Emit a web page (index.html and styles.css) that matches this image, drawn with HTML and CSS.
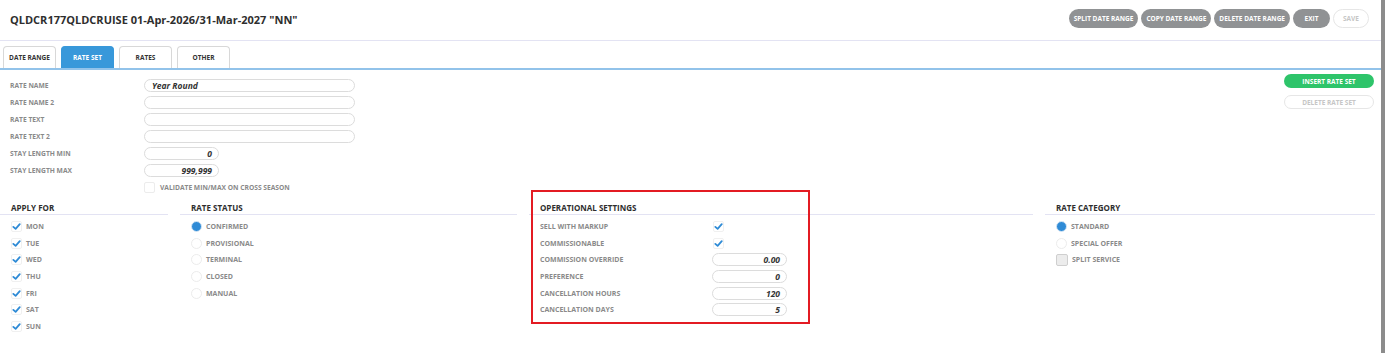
FILE: index.html
```html
<html>
<head>
<title>Rate Set</title>
<link rel="stylesheet" href="styles.css">
</head>
<body>
<div id="page">
<div id="dialog">

<div id="header">
  <h1>QLDCR177QLDCRUISE 01-Apr-2026/31-Mar-2027 "NN"</h1>
  <div class="actions">
    <button class="pill grey">SPLIT DATE RANGE</button>
    <button class="pill grey">COPY DATE RANGE</button>
    <button class="pill grey">DELETE DATE RANGE</button>
    <button class="pill grey exit">EXIT</button>
    <button class="pill light save">SAVE</button>
  </div>
</div>

<div id="tabs">
  <div class="tab">DATE RANGE</div>
  <div class="tab active">RATE SET</div>
  <div class="tab">RATES</div>
  <div class="tab">OTHER</div>
</div>

<div id="rate-set">
  <div class="fields">
    <div class="row"><label>RATE NAME</label><div class="input wide name">Year Round</div></div>
    <div class="row"><label>RATE NAME 2</label><div class="input wide"></div></div>
    <div class="row"><label>RATE TEXT</label><div class="input wide"></div></div>
    <div class="row"><label>RATE TEXT 2</label><div class="input wide"></div></div>
    <div class="row"><label>STAY LENGTH MIN</label><div class="input num">0</div></div>
    <div class="row"><label>STAY LENGTH MAX</label><div class="input num">999,999</div></div>
    <div class="row"><label></label><span class="box empty"></span><span class="opt">VALIDATE MIN/MAX ON CROSS SEASON</span></div>
  </div>
  <div class="side">
    <button class="pill green">INSERT RATE SET</button>
    <button class="pill light">DELETE RATE SET</button>
  </div>
</div>

<div id="sections">
  <div class="section">
    <div class="section-header">APPLY FOR</div>
    <div class="item"><span class="box checked"></span>MON</div>
    <div class="item"><span class="box checked"></span>TUE</div>
    <div class="item"><span class="box checked"></span>WED</div>
    <div class="item"><span class="box checked"></span>THU</div>
    <div class="item"><span class="box checked"></span>FRI</div>
    <div class="item"><span class="box checked"></span>SAT</div>
    <div class="item"><span class="box checked"></span>SUN</div>
  </div>

  <div class="section">
    <div class="section-header">RATE STATUS</div>
    <div class="item"><span class="radio on"></span>CONFIRMED</div>
    <div class="item"><span class="radio"></span>PROVISIONAL</div>
    <div class="item"><span class="radio"></span>TERMINAL</div>
    <div class="item"><span class="radio"></span>CLOSED</div>
    <div class="item"><span class="radio"></span>MANUAL</div>
  </div>

  <div class="section">
    <div class="highlight"></div>
    <div class="section-header">OPERATIONAL SETTINGS</div>
    <div class="item op"><span class="op-label">SELL WITH MARKUP</span><span class="box checked"></span></div>
    <div class="item op"><span class="op-label">COMMISSIONABLE</span><span class="box checked"></span></div>
    <div class="item op"><span class="op-label">COMMISSION OVERRIDE</span><div class="input num">0.00</div></div>
    <div class="item op"><span class="op-label">PREFERENCE</span><div class="input num">0</div></div>
    <div class="item op"><span class="op-label">CANCELLATION HOURS</span><div class="input num">120</div></div>
    <div class="item op"><span class="op-label">CANCELLATION DAYS</span><div class="input num">5</div></div>
  </div>

  <div class="section">
    <div class="section-header">RATE CATEGORY</div>
    <div class="item"><span class="radio on"></span>STANDARD</div>
    <div class="item"><span class="radio"></span>SPECIAL OFFER</div>
    <div class="item"><span class="box grey"></span>SPLIT SERVICE</div>
  </div>
</div>

</div>
<div id="backdrop"></div>
</div>
</body>
</html>
```

FILE: styles.css
```css
body {
  margin:0;
  font-family:"Open Sans", "Liberation Sans", sans-serif;
  background:#fff;
  color:#333;
}

#page {
  display:flex;
  height:353px;
}

#dialog {
  width:1381px;
  background:#fff;
}

#backdrop {
  flex:1;
  background:#8c8c8c;
}

#header {
  display:flex;
  align-items:center;
  justify-content:space-between;
  height:40px;
  border-bottom:1px solid #e3e3f3;
  padding:0 12px 0 10px;
}

#header h1 {
  margin:0;
  font-size:11px;
  font-weight:700;
  color:#2e2e2e;
  padding-bottom:1px;
}

.actions {
  display:flex;
  gap:3px;
  margin-top:-3px;
}

.pill {
  font-family:"Open Sans", sans-serif;
  font-weight:700;
  font-size:6.5px;
  border-radius:10px;
  border:1px solid transparent;
  height:19px;
  padding:0 4px;
  cursor:pointer;
}

.pill.grey {
  background:#909294;
  color:#fff;
}

.pill.exit {
  width:37px;
}

.pill.light {
  background:#fff;
  border-color:#e6e6e6;
  color:#c6c6c6;
}

.pill.save {
  width:36px;
}

.pill.green {
  background:#2ec46a;
  color:#fff;
}

#tabs {
  display:flex;
  gap:5px;
  padding:5px 0 0 3px;
  border-bottom:2px solid #92c3ea;
}

.tab {
  width:51px;
  height:21px;
  border:1px solid #d8d8d8;
  border-bottom:none;
  border-radius:4px 4px 0 0;
  font-size:6.5px;
  font-weight:700;
  display:flex;
  align-items:center;
  justify-content:center;
  color:#333;
}

.tab.active {
  background:#3898da;
  border-color:#3898da;
  color:#fff;
}

#rate-set {
  display:flex;
  justify-content:space-between;
  padding:7px 7px 0 10px;
}

.row {
  display:flex;
  align-items:center;
  height:17px;
}

.row label {
  width:134px;
  font-size:6.7px;
  font-weight:700;
  color:#8a8a8a;
}

.input {
  box-sizing:border-box;
  height:13px;
  border:1px solid #dcdcdc;
  border-radius:7px;
  font-size:8.5px;
  font-style:italic;
  font-weight:700;
  color:#333;
  display:flex;
  align-items:center;
  padding:0 6px;
}

.input.wide {
  width:211px;
}

.input.name {
  padding-left:7px;
}

.input.num {
  width:75px;
  justify-content:flex-end;
}

.box {
  box-sizing:border-box;
  display:inline-block;
  width:11px;
  height:11px;
  border:1px solid #ececec;
  border-radius:2px;
  margin-right:5px;
  flex:none;
  background:#fff;
}

.box.checked {
  border-color:#f0f0f0;
  background:#fff url("data:image/svg+xml;utf8,<svg xmlns='http://www.w3.org/2000/svg' viewBox='0 0 10 10'><path d='M1.5 5.4 L4 7.6 L8.6 2.4' fill='none' stroke='%232f8bd6' stroke-width='2' stroke-linecap='round' stroke-linejoin='round'/></svg>") no-repeat center / 9px 9px;
}

.box.grey {
  background:#ececec;
  border-color:#cfcfcf;
  width:12px;
  height:12px;
}

.opt {
  font-size:6.7px;
  font-weight:700;
  color:#8a8a8a;
}

.side {
  display:flex;
  flex-direction:column;
  gap:7px;
  width:90px;
  margin-top:-3px;
}

.side .pill {
  height:14px;
  width:90px;
}

#sections {
  display:grid;
  grid-template-columns:168px 337px 504px 330px;
  column-gap:12px;
  margin-top:6px;
}

.section {
  position:relative;
}

.section-header {
  font-size:8px;
  font-weight:700;
  color:#2e2e2e;
  padding:0 0 1px 11px;
  border-bottom:1px solid #e3e3f3;
  margin-bottom:3px;
}

.item {
  display:flex;
  align-items:center;
  height:16.7px;
  padding-left:11px;
  font-size:7px;
  font-weight:700;
  color:#8a8a8a;
}

.item .box {
  margin-right:4px;
}

.radio {
  box-sizing:border-box;
  width:11px;
  height:11px;
  border:1px solid #ececec;
  border-radius:50%;
  margin-right:4px;
  flex:none;
}

.radio.on {
  background:#2f8bd6;
  border:1px solid #d9e8f6;
}

.op-label {
  width:172px;
}

.item.op .box {
  margin-left:1px;
}

.highlight {
  position:absolute;
  left:2px;
  top:-12px;
  width:275px;
  height:130px;
  border:2px solid #e31b23;
  pointer-events:none;
}
```
